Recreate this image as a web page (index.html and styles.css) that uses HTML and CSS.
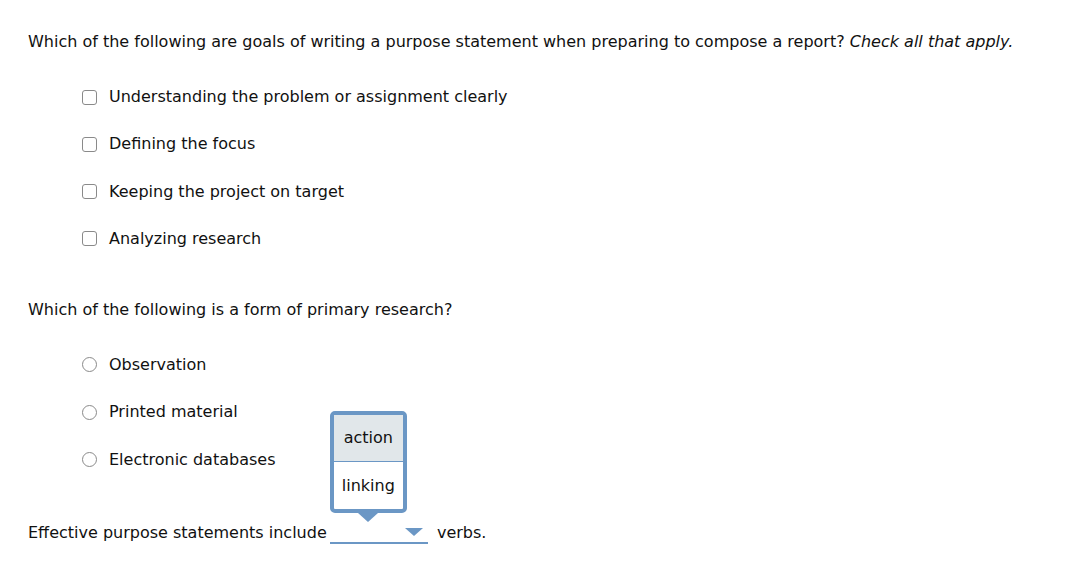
FILE: index.html
```html
<!DOCTYPE html>
<html lang="en">
<head>
    <meta charset="UTF-8" />
    <title>Purpose statements</title>
    <link rel="stylesheet" href="styles.css">
</head>
<body>

    <div class="soru">
        <p class="soru-metin">Which of the following are goals of writing a purpose statement when preparing to compose a report? <em>Check all that apply.</em></p>
        <ul class="secenekler">
            <li><label><input type="checkbox" class="kutu" /> Understanding the problem or assignment clearly</label></li>
            <li><label><input type="checkbox" class="kutu" /> Defining the focus</label></li>
            <li><label><input type="checkbox" class="kutu" /> Keeping the project on target</label></li>
            <li><label><input type="checkbox" class="kutu" /> Analyzing research</label></li>
        </ul>
    </div>

    <div class="soru">
        <p class="soru-metin">Which of the following is a form of primary research?</p>
        <ul class="secenekler radyo">
            <li><label><input type="radio" name="birincil" class="yuvarlak" /> Observation</label></li>
            <li><label><input type="radio" name="birincil" class="yuvarlak" /> Printed material</label></li>
            <li><label><input type="radio" name="birincil" class="yuvarlak" /> Electronic databases</label></li>
        </ul>
    </div>

    <p class="cumle">
        Effective purpose statements include
        <span class="secim">
            <span class="acilir">
                <span class="secenek aktif">action</span>
                <span class="secenek">linking</span>
            </span>
            <span class="ok"></span>
        </span>
        verbs.
    </p>

</body>
</html>
```

FILE: styles.css
```css
body {
    font-family: "DejaVu Sans", Verdana, sans-serif;
    font-size: 16px;
    color: #111;
    background: #ffffff;
    margin: 0;
    padding: 32px 28px 0 28px;
}

.soru-metin {
    margin: 0;
    line-height: 20px;
}

.secenekler {
    list-style: none;
    margin: 35px 0 0 0;
    padding: 0 0 0 54px;
    display: flex;
    flex-direction: column;
    gap: 27.3px;
}

    .secenekler label {
        display: flex;
        align-items: center;
        gap: 12px;
        height: 20px;
        line-height: 20px;
    }

.kutu, .yuvarlak {
    appearance: none;
    box-sizing: border-box;
    width: 15px;
    height: 15px;
    margin: 0;
    border: 1px solid #8a8a8a;
    background: #fff;
    flex: none;
}

.kutu {
    border-radius: 3px;
}

.yuvarlak {
    border-radius: 50%;
}

.soru + .soru {
    margin-top: 51px;
}

.radyo {
    gap: 27.5px;
}

.cumle {
    margin: 52px 0 0 0;
    line-height: 20px;
}

.secim {
    position: relative;
    display: inline-block;
    width: 98px;
    height: 20px;
    margin: 0 4px 0 -2px;
    vertical-align: -6px;
    border-bottom: 2px solid #6b97c5;
}

.ok {
    position: absolute;
    right: 5px;
    top: 6px;
    width: 0;
    height: 0;
    border-left: 9px solid transparent;
    border-right: 9px solid transparent;
    border-top: 8px solid #6b97c5;
}

.acilir {
    position: absolute;
    left: 0;
    bottom: 29px;
    width: 69px;
    border: 4px solid #6b97c5;
    border-radius: 5px;
    background: #fff;
    display: flex;
    flex-direction: column;
}

    .acilir::after {
        content: "";
        position: absolute;
        left: 50%;
        bottom: -13px;
        margin-left: -10px;
        border-left: 10px solid transparent;
        border-right: 10px solid transparent;
        border-top: 9px solid #6b97c5;
    }

.secenek {
    display: block;
    text-align: center;
    height: 47px;
    line-height: 47px;
}

    .secenek.aktif {
        height: 46px;
        line-height: 46px;
        background: #e1e7ea;
        border-bottom: 1px solid #6b97c5;
    }
```
